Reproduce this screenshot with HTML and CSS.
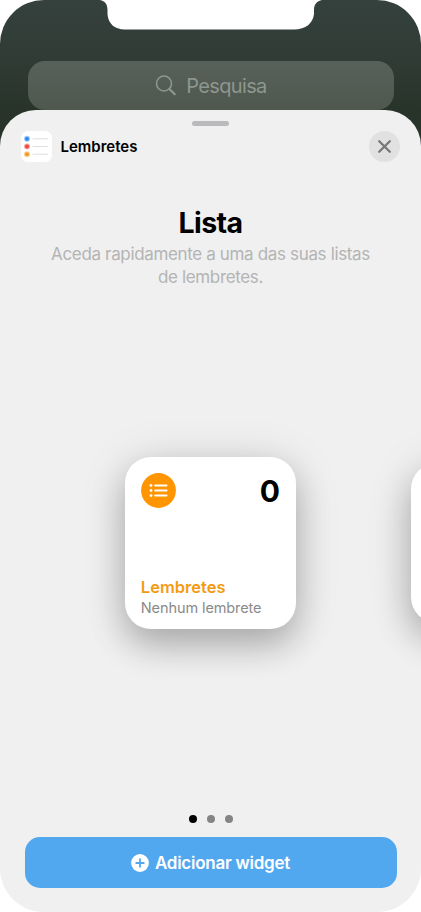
FILE: index.html
```html
<!DOCTYPE html>
<html lang="pt">
<head>
    <meta charset="UTF-8">
    <meta name="viewport" content="width=device-width, initial-scale=1.0">
    <title>Adicionar widget</title>
    <link rel="stylesheet" href="styles.css">
</head>
<body>

    <div class="phone">
        <svg class="notch" width="226" height="30" viewBox="0 0 226 30">
            <path d="M0 0 C5 1 7.5 4 7.5 10 V14 C8 23 14 29.5 25 29.5 H194 C206 29.5 213 23 214 14 V10 C214 4 217 1 222 0 Z" fill="#fff"/>
        </svg>

        <div class="search">
            <svg width="22" height="22" viewBox="0 0 22 22" fill="none" stroke="currentColor">
                <circle cx="9" cy="8.5" r="7.5" stroke-width="1.6"/>
                <path d="M14.5 14 L19.7 19.2" stroke-width="2.2" stroke-linecap="round"/>
            </svg>
            <span>Pesquisa</span>
        </div>

        <div class="sheet">
            <div class="grabber"></div>

            <div class="header">
                <svg class="app-icon" width="31" height="31" viewBox="0 0 31 31">
                    <rect width="31" height="31" rx="7" fill="#fff"/>
                    <g stroke="#dedfe1" stroke-width="1">
                        <path d="M11.5 7.8 H27 M11.5 15.5 H27 M11.5 23.2 H27"/>
                    </g>
                    <g fill="#2585ef"><circle cx="6" cy="7.8" r="3" opacity=".45"/><circle cx="6" cy="7.8" r="1.9"/></g>
                    <g fill="#ee4541"><circle cx="6" cy="15.5" r="3" opacity=".45"/><circle cx="6" cy="15.5" r="1.9"/></g>
                    <g fill="#f19a20"><circle cx="6" cy="23.2" r="3" opacity=".45"/><circle cx="6" cy="23.2" r="1.9"/></g>
                </svg>
                <span class="app-name">Lembretes</span>
                <button class="close" aria-label="Fechar">
                    <svg width="15" height="15" viewBox="0 0 15 15">
                        <path d="M2.2 2.2 L12.8 12.8 M12.8 2.2 L2.2 12.8" stroke="#77777b" stroke-width="2.3" stroke-linecap="round"/>
                    </svg>
                </button>
            </div>

            <h1>Lista</h1>
            <p class="description">Aceda rapidamente a uma das suas listas<br>de lembretes.</p>

            <div class="carousel">
                <div class="widget">
                    <div class="widget-top">
                        <svg width="35" height="35" viewBox="0 0 35 35">
                            <circle cx="17.5" cy="17.5" r="17.4" fill="#ff9500"/>
                            <g fill="#fff">
                                <circle cx="10" cy="12.4" r="1.4"/>
                                <circle cx="10" cy="17.5" r="1.4"/>
                                <circle cx="10" cy="22.6" r="1.4"/>
                            </g>
                            <path d="M14.2 12.4 H25.5 M14.2 17.5 H25.5 M14.2 22.6 H25.5" stroke="#fff" stroke-width="2" stroke-linecap="round"/>
                        </svg>
                        <span class="count">0</span>
                    </div>
                    <div class="widget-name">Lembretes</div>
                    <div class="widget-note">Nenhum lembrete</div>
                </div>
                <div class="widget widget-next"></div>
            </div>

            <div class="dots">
                <span class="dot active"></span>
                <span class="dot"></span>
                <span class="dot"></span>
            </div>

            <button class="add">
                <svg width="18" height="18" viewBox="0 0 18 18">
                    <circle cx="9" cy="9" r="8.9" fill="#fff"/>
                    <path d="M9 5.2 V12.8 M5.2 9 H12.8" stroke="#52a8ef" stroke-width="1.8" stroke-linecap="round"/>
                </svg>
                <span>Adicionar widget</span>
            </button>
        </div>
    </div>

</body>
</html>
```

FILE: styles.css
```css
* {
    box-sizing: border-box;
}
body {
    margin: 0;
    background-color: #fff;
    font-family: 'Inter', 'Liberation Sans', sans-serif;
}
button {
    border: none;
    padding: 0;
    font-family: inherit;
}
.phone {
    position: relative;
    width: 421px;
    height: 912px;
    padding-top: 61px;
    overflow: hidden;
    border-radius: 44px;
    background: linear-gradient(#35413d 0, #303b35 60px, #28332a 110px, #28332a 150px, #f0f0f0 150px);
}
.notch {
    position: absolute;
    top: 0;
    left: 100px;
}
.search {
    display: flex;
    align-items: center;
    justify-content: center;
    gap: 9px;
    width: 366px;
    height: 49px;
    margin: 0 auto 0 27.5px;
    padding-left: 1px;
    border-radius: 17px;
    background: linear-gradient(#57615b, #4e584e);
    color: #8d978e;
    font-size: 20px;
    letter-spacing: -0.65px;
}
.sheet {
    display: flex;
    flex-direction: column;
    align-items: center;
    height: 802px;
    padding-top: 11px;
    border-radius: 36px 36px 0 0;
    background-color: #f0f0f0;
}
.grabber {
    width: 37px;
    height: 5px;
    border-radius: 3px;
    background-color: #bababd;
}
.header {
    display: flex;
    align-items: center;
    width: 100%;
    height: 31px;
    margin-top: 5px;
    padding: 0 21.5px 0 21px;
}
.app-name {
    flex: 1;
    margin-left: 8.5px;
    font-size: 15px;
    font-weight: 600;
}
.close {
    display: flex;
    align-items: center;
    justify-content: center;
    width: 31px;
    height: 31px;
    border-radius: 50%;
    background-color: #e1e1e2;
}
h1 {
    margin: 44px 0 0;
    font-size: 28.5px;
    line-height: 34px;
    font-weight: 700;
    letter-spacing: -0.6px;
}
.description {
    margin: 3px 0 0;
    color: #b4b4b4;
    font-size: 17px;
    line-height: 23px;
    letter-spacing: -0.35px;
    text-align: center;
}
.carousel {
    display: flex;
    align-items: center;
    align-self: flex-start;
    margin-top: 168.4px;
    padding-left: 124.8px;
}
.widget {
    display: flex;
    flex-direction: column;
    flex-shrink: 0;
    width: 171.6px;
    height: 171.6px;
    padding: 16px 16.5px 11px 16px;
    border-radius: 26px;
    background-color: #fff;
    box-shadow: 0 17px 34px rgba(0, 0, 0, 0.23), 0 4px 48px rgba(0, 0, 0, 0.12);
}
.widget-next {
    width: 160px;
    height: 160px;
    margin-left: 114.6px;
}
.widget-top {
    display: flex;
    align-items: center;
    justify-content: space-between;
    height: 35px;
}
.count {
    font-size: 30px;
    font-weight: 700;
}
.widget-name {
    margin-top: auto;
    color: #f49b14;
    font-size: 16.5px;
    line-height: 20px;
    font-weight: 600;
}
.widget-note {
    color: #8a8a8a;
    font-size: 14.5px;
    line-height: 21px;
    letter-spacing: -0.1px;
}
.dots {
    display: flex;
    gap: 10px;
    margin-top: auto;
}
.dot {
    width: 8px;
    height: 8px;
    border-radius: 50%;
    background-color: #858588;
}
.dot.active {
    background-color: #000;
}
.add {
    display: flex;
    align-items: center;
    justify-content: center;
    gap: 6px;
    width: 372px;
    height: 51px;
    margin: 14px 0 24.5px;
    padding-top: 1px;
    border-radius: 15px;
    background-color: #52a8ef;
    color: #fff;
    font-size: 17px;
    font-weight: 600;
    letter-spacing: -0.25px;
}
```
